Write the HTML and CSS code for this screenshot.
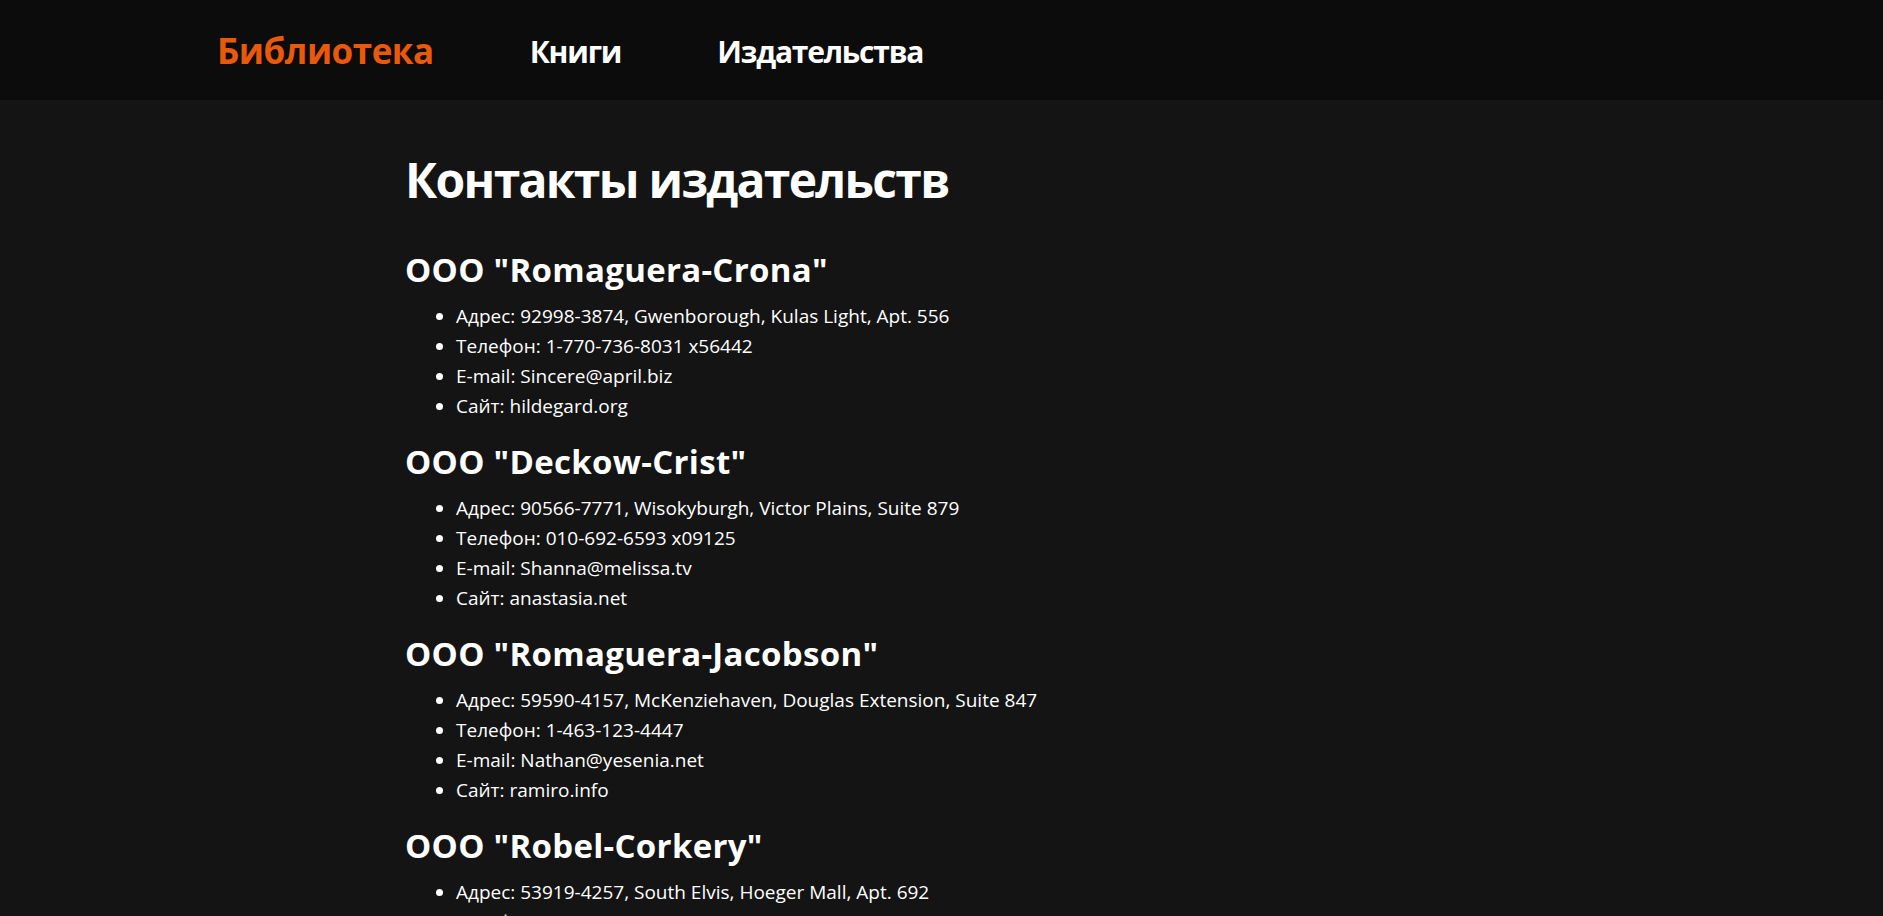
FILE: index.html
```html
<!DOCTYPE html>
<html lang="ru">
<head>
<meta charset="utf-8">
<title>Библиотека</title>
<link rel="stylesheet" href="styles.css">
</head>
<body>
<header class="header">
  <a class="logo" href="#">Библиотека</a>
  <nav class="nav">
    <a class="nav-link" href="#">Книги</a>
    <a class="nav-link" href="#">Издательства</a>
  </nav>
</header>
<main class="main">
  <h1 class="title">Контакты издательств</h1>
  <section class="pub">
    <h2 class="pub-name">ООО "Romaguera-Crona"</h2>
    <ul class="pub-list">
      <li>Адрес: 92998-3874, Gwenborough, Kulas Light, Apt. 556</li>
      <li>Телефон: 1-770-736-8031 x56442</li>
      <li>E-mail: Sincere@april.biz</li>
      <li>Сайт: hildegard.org</li>
    </ul>
  </section>
  <section class="pub">
    <h2 class="pub-name">ООО "Deckow-Crist"</h2>
    <ul class="pub-list">
      <li>Адрес: 90566-7771, Wisokyburgh, Victor Plains, Suite 879</li>
      <li>Телефон: 010-692-6593 x09125</li>
      <li>E-mail: Shanna@melissa.tv</li>
      <li>Сайт: anastasia.net</li>
    </ul>
  </section>
  <section class="pub">
    <h2 class="pub-name">ООО "Romaguera-Jacobson"</h2>
    <ul class="pub-list">
      <li>Адрес: 59590-4157, McKenziehaven, Douglas Extension, Suite 847</li>
      <li>Телефон: 1-463-123-4447</li>
      <li>E-mail: Nathan@yesenia.net</li>
      <li>Сайт: ramiro.info</li>
    </ul>
  </section>
  <section class="pub">
    <h2 class="pub-name">ООО "Robel-Corkery"</h2>
    <ul class="pub-list">
      <li>Адрес: 53919-4257, South Elvis, Hoeger Mall, Apt. 692</li>
      <li>Телефон: 493-170-9623 x156</li>
      <li>E-mail: Lucio_Hettinger@annie.ca</li>
      <li>Сайт: kale.biz</li>
    </ul>
  </section>
</main>
</body>
</html>
```

FILE: styles.css
```css
html, body {
  margin: 0;
  padding: 0;
}
body {
  background: #141414;
  color: #ffffff;
  font-family: "Open Sans", "Noto Sans", sans-serif;
  overflow: hidden;
}
.header {
  height: 100px;
  background: #0c0c0c;
  display: flex;
  align-items: center;
  padding-left: 217px;
  gap: 96px;
}
.logo {
  color: #e8590c;
  font-weight: 700;
  font-size: 35px;
  text-decoration: none;
  letter-spacing: -0.5px;
}
.nav {
  display: flex;
  gap: 96px;
  padding-top: 2px;
}
.nav-link {
  color: #ffffff;
  font-weight: 700;
  font-size: 30px;
  text-decoration: none;
  letter-spacing: -1.2px;
}
.main {
  padding: 49px 0 0 405px;
}
.title {
  margin: 0 0 39px;
  font-size: 48px;
  line-height: 62px;
  font-weight: 700;
  letter-spacing: -1.7px;
}
.pub {
  margin-bottom: 21px;
}
.pub-name {
  margin: 0 0 11px;
  font-size: 33px;
  line-height: 40px;
  font-weight: 700;
  letter-spacing: 0.3px;
}
.pub-list {
  margin: 0;
  padding-left: 51px;
  font-size: 19px;
  line-height: 30px;
}
```
